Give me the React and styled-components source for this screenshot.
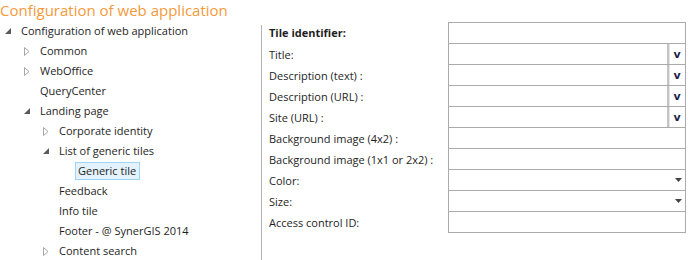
import React from "react";
import styled, { createGlobalStyle } from "styled-components";

const GlobalStyle = createGlobalStyle`
  html, body {
    margin: 0;
    padding: 0;
    background: #fff;
  }
  body {
    font-family: "Open Sans", "Noto Sans", sans-serif;
    color: #1e1e1e;
  }
`;

const Page = styled.div`
  width: 688px;
  height: 260px;
  overflow: hidden;
`;

const Heading = styled.h1`
  margin: 0;
  height: 21px;
  font-size: 15px;
  font-weight: 400;
  line-height: 20px;
  color: #f39a3b;
  white-space: nowrap;
`;

const Main = styled.div`
  display: flex;
  height: 239px;
`;

const Tree = styled.ul`
  list-style: none;
  margin: 0;
  padding: 0;
  width: 261px;
  font-size: 11px;
`;

const Node = styled.li`
  display: flex;
  align-items: center;
  height: 20px;
  padding-left: ${(p) => p.$level * 19}px;
  white-space: nowrap;
`;

const Expander = styled.span`
  width: 16px;
  margin-right: 5px;
  display: flex;
  justify-content: center;
  align-items: center;
`;

const NodeLabel = styled.span`
  line-height: 16px;
  ${(p) =>
    p.$selected &&
    `
    margin-left: -3px;
    padding: 0 3px 0 2px;
    border: 1px solid #9ed4f6;
    background: #e3f2fc;
  `}
`;

const Divider = styled.div`
  width: 1px;
  margin-top: 4px;
  background: #b4b4b4;
`;

const Form = styled.div`
  padding: 1px 0 0 7px;
  font-size: 11px;
`;

const Row = styled.div`
  display: flex;
`;

const Label = styled.div`
  width: 179px;
  padding-top: 3px;
  line-height: 16px;
  font-weight: ${(p) => (p.$bold ? 700 : 400)};
  white-space: nowrap;
`;

const Field = styled.div`
  width: 238px;
  box-sizing: border-box;
  display: flex;
  border: 1px solid #ababab;
  border-top: ${(p) => (p.$first ? "1px solid #ababab" : "none")};
  height: ${(p) => (p.$first ? 22 : 21)}px;
`;

const Input = styled.div`
  flex: 1;
`;

const PickButton = styled.div`
  width: 16px;
  border-left: 2px solid #c4c4c4;
  box-shadow: inset 1px 0 0 #e6e6e6;
  display: flex;
  align-items: center;
  justify-content: center;
  font-family: "DejaVu Sans", sans-serif;
  font-weight: 700;
  font-size: 11px;
  color: #1b1f4a;
`;

const DropArrow = styled.div`
  width: 14px;
  display: flex;
  align-items: center;
  justify-content: center;
`;

const Collapsed = () => (
  <svg width="6" height="9" viewBox="0 0 6 9">
    <path d="M0.5 0.5 L5 4.5 L0.5 8.5 Z" fill="none" stroke="#a6a6a6" />
  </svg>
);

const Expanded = () => (
  <svg width="6" height="6" viewBox="0 0 6 6">
    <path d="M6 0 L6 6 L0 6 Z" fill="#5a5a5a" />
  </svg>
);

const Caret = () => (
  <svg width="7" height="4" viewBox="0 0 7 4">
    <path d="M0 0 H7 L3.5 4 Z" fill="#444" />
  </svg>
);

const treeItems = [
  { label: "Configuration of web application", level: 0, state: "open" },
  { label: "Common", level: 1, state: "closed" },
  { label: "WebOffice", level: 1, state: "closed" },
  { label: "QueryCenter", level: 1 },
  { label: "Landing page", level: 1, state: "open" },
  { label: "Corporate identity", level: 2, state: "closed" },
  { label: "List of generic tiles", level: 2, state: "open" },
  { label: "Generic tile", level: 3, selected: true },
  { label: "Feedback", level: 2 },
  { label: "Info tile", level: 2 },
  { label: "Footer - @ SynerGIS 2014", level: 2 },
  { label: "Content search", level: 2, state: "closed" },
];

const fields = [
  { label: "Tile identifier:", bold: true },
  { label: "Title:", kind: "pick" },
  { label: "Description (text) :", kind: "pick" },
  { label: "Description (URL) :", kind: "pick" },
  { label: "Site (URL) :", kind: "pick" },
  { label: "Background image (4x2) :" },
  { label: "Background image (1x1 or 2x2) :" },
  { label: "Color:", kind: "select" },
  { label: "Size:", kind: "select" },
  { label: "Access control ID:" },
];

export default function App() {
  return (
    <Page>
      <GlobalStyle />
      <Heading>Configuration of web application</Heading>
      <Main>
        <Tree>
          {treeItems.map((item) => (
            <Node key={item.label} $level={item.level}>
              <Expander>
                {item.state === "open" && <Expanded />}
                {item.state === "closed" && <Collapsed />}
              </Expander>
              <NodeLabel $selected={item.selected}>{item.label}</NodeLabel>
            </Node>
          ))}
        </Tree>
        <Divider />
        <Form>
          {fields.map((f, i) => (
            <Row key={f.label}>
              <Label $bold={f.bold}>{f.label}</Label>
              <Field $first={i === 0}>
                <Input />
                {f.kind === "pick" && <PickButton>v</PickButton>}
                {f.kind === "select" && (
                  <DropArrow>
                    <Caret />
                  </DropArrow>
                )}
              </Field>
            </Row>
          ))}
        </Form>
      </Main>
    </Page>
  );
}
